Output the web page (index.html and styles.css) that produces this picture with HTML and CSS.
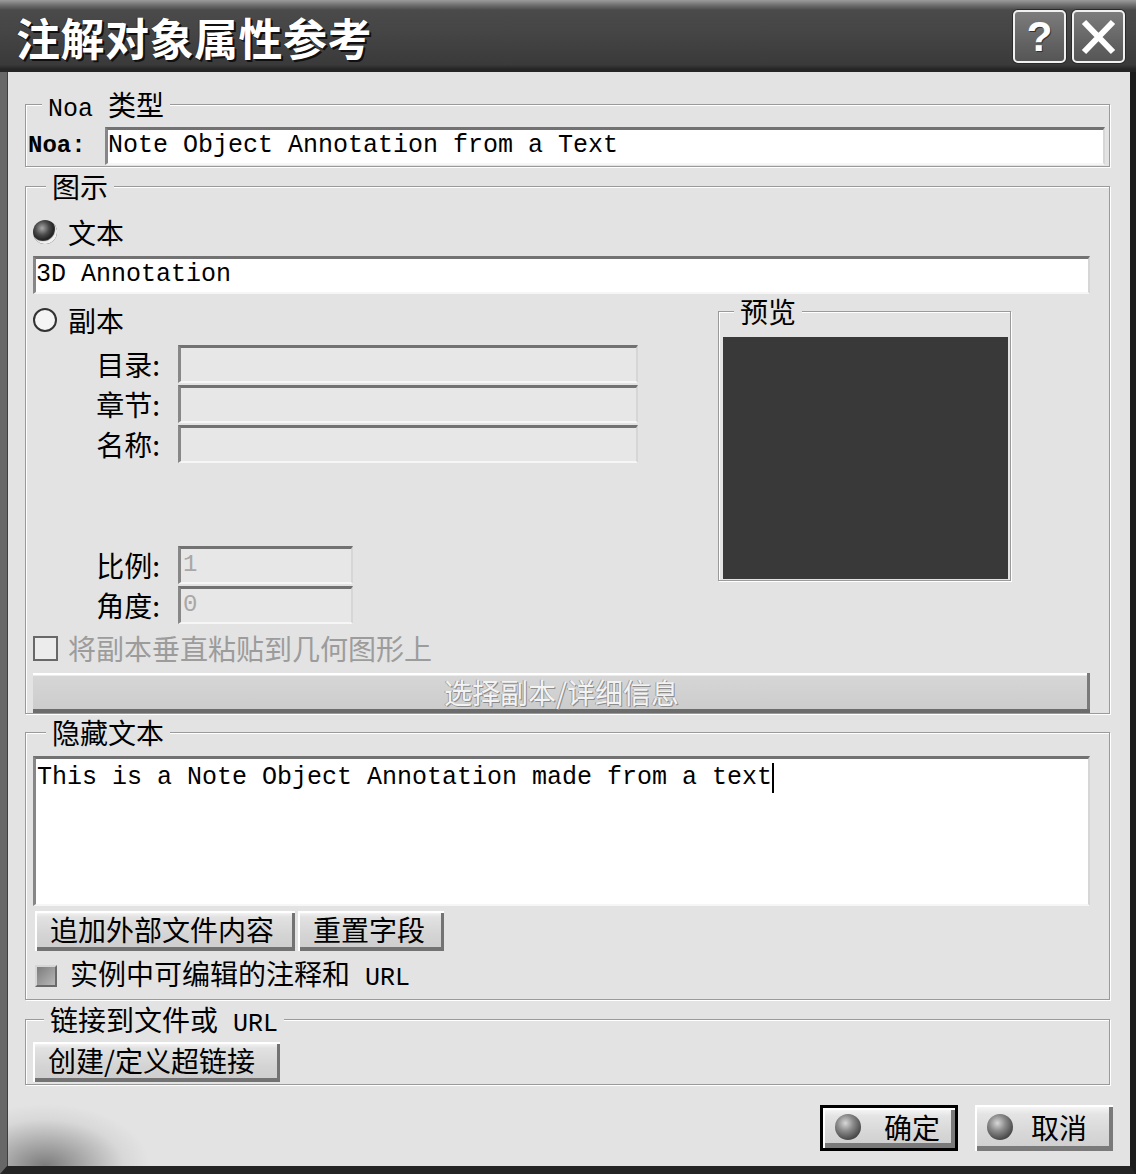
FILE: index.html
```html
<!DOCTYPE html>
<html lang="zh-CN">
<head>
<meta charset="utf-8">
<title>注解对象属性参考</title>
<link rel="stylesheet" href="styles.css">
</head>
<body>
<div class="window">
  <div class="titlebar">
    <div class="title">注解对象属性参考</div>
    <div class="title-btns">
      <div class="tbtn"><span class="q">?</span></div>
      <div class="tbtn">
        <svg width="40" height="40" viewBox="0 0 40 40"><path d="M5 5 L34 35 M34 5 L5 35" stroke="#fff" stroke-width="6" stroke-linecap="butt" fill="none"/></svg>
      </div>
    </div>
  </div>

  <div class="body">
    <fieldset class="group g1">
      <legend class="lg-g1"><span class="lat">Noa </span>类型</legend>
      <div class="row noa-row">
        <span class="lbl-noa">Noa:</span>
        <div class="field grow">Note Object Annotation from a Text</div>
      </div>
    </fieldset>

    <fieldset class="group g2">
      <legend class="lg">图示</legend>
      <div class="radio-row first">
        <span class="radio on"></span><span>文本</span>
      </div>
      <div class="field">3D Annotation</div>
      <div class="split">
        <div class="left-col">
          <div class="radio-row">
            <span class="radio off"></span><span>副本</span>
          </div>
          <div class="frow first-f">
            <span class="flbl">目录:</span><div class="field dis w460"></div>
          </div>
          <div class="frow">
            <span class="flbl">章节:</span><div class="field dis w460"></div>
          </div>
          <div class="frow">
            <span class="flbl">名称:</span><div class="field dis w460"></div>
          </div>
          <div class="frow scale-row">
            <span class="flbl">比例:</span><div class="field dis w175">1</div>
          </div>
          <div class="frow">
            <span class="flbl">角度:</span><div class="field dis w175">0</div>
          </div>
        </div>
        <fieldset class="group preview">
          <legend class="lg-pv">预览</legend>
          <div class="screen"></div>
        </fieldset>
      </div>
      <div class="check-row disabled">
        <span class="cbox"></span><span>将副本垂直粘贴到几何图形上</span>
      </div>
      <button class="btn-wide" type="button">选择副本/详细信息</button>
    </fieldset>

    <fieldset class="group g3">
      <legend class="lg">隐藏文本</legend>
      <div class="textarea">This is a Note Object Annotation made from a text<span class="caret"></span></div>
      <div class="btn-row">
        <button class="btn b-append" type="button">追加外部文件内容</button>
        <button class="btn b-reset" type="button">重置字段</button>
      </div>
      <div class="check-row checked-row">
        <span class="cbox on"></span><span>实例中可编辑的注释和<span class="lat"> URL</span></span>
      </div>
    </fieldset>

    <fieldset class="group g4">
      <legend class="lg-g4">链接到文件或<span class="lat"> URL</span></legend>
      <button class="btn b-link" type="button">创建/定义超链接</button>
    </fieldset>

    <div class="footer">
      <button class="dlg-btn default" type="button"><span class="sphere"></span><span class="dlg-txt">确定</span></button>
      <button class="dlg-btn cancel" type="button"><span class="sphere"></span><span class="dlg-txt">取消</span></button>
    </div>
  </div>
</div>
</body>
</html>
```
FILE: styles.css
```css
* { box-sizing: border-box; }
html, body { margin: 0; padding: 0; }
body {
  background: #ffffff;
  font-family: "Noto Sans CJK SC", sans-serif;
  color: #000;
}
.window {
  width: 1136px;
  height: 1174px;
  display: flex;
  flex-direction: column;
  background: #2a2a2a;
}

/* title bar */
.titlebar {
  height: 72px;
  flex: none;
  display: flex;
  align-items: center;
  justify-content: space-between;
  padding: 0 11px 2px 16px;
  background: linear-gradient(to bottom, #9c9c9c 0, #707070 5px, #4a4a4a 10px, #454545 45%, #3a3a3a 90%, #252525 96%, #252525 100%);
}
.title {
  color: #fff;
  font-size: 44px;
  font-weight: 700;
  line-height: 44px;
  padding-top: 4px;
  letter-spacing: 0.5px;
  text-shadow: 2px 2px 0 #101010, 1px 1px 0 #202020, -1px 0 0 #333;
}
.title-btns {
  display: flex;
  gap: 6px;
  margin-top: 3px;
}
.tbtn {
  width: 53px;
  height: 53px;
  border: 2px solid #f0f0f0;
  border-radius: 5px;
  background: linear-gradient(to bottom, #7c7c7c, #606060 70%, #565656);
  box-shadow: 0 0 0 1px #2a2a2a;
  display: flex;
  align-items: center;
  justify-content: center;
}
.q {
  color: #fff;
  font-family: "Liberation Sans", sans-serif;
  font-weight: 700;
  font-size: 42px;
  line-height: 42px;
  text-shadow: 1px 1px 0 #333;
}

/* body */
.body {
  flex: 1;
  display: flex;
  flex-direction: column;
  padding: 18px 20px 0 18px;
  background-color: #e3e3e3;
  background-image: radial-gradient(ellipse 105px 62px at 38px 100%, rgba(80,80,80,0.7) 0, rgba(120,120,120,0.5) 40%, rgba(190,190,190,0.3) 75%, rgba(227,227,227,0) 100%);
  background-repeat: no-repeat;
  border-left: 7px solid #676767;
  border-right: 6px solid #1c1c1c;
  border-bottom: 8px solid #242424;
  box-shadow: inset 1px 0 0 #3e3e3e;
}

.lat {
  font-family: "Liberation Mono", monospace;
  font-size: 25px;
  white-space: pre;
}

/* group boxes */
fieldset.group {
  margin: 0;
  min-width: 0;
  border: 1px solid #9a9a9a;
  box-shadow: inset 1px 1px 0 #fff, 1px 1px 0 #fff;
  padding: 0 19px 0 7px;
}
fieldset.group legend {
  padding: 0 6px;
  font-size: 28px;
  line-height: 28px;
  height: 28px;
  background: #e3e3e3;
  white-space: pre;
}
.lg { margin-left: 13px; }
.lg-g1 { margin-left: 14px; }
.lg-g4 { margin-left: 11px; }
.lg-pv { margin-left: 11px; }

.g1 { padding: 0 4px 1px 2px !important; }
.g2 { margin-top: 5px !important; }
.g3 { margin-top: 4px !important; padding-bottom: 5px !important; }
.g4 { margin-top: 5px !important; padding-bottom: 2px !important; }

.row { display: flex; align-items: center; }
.noa-row { margin-top: 9px; height: 38px; }
.lbl-noa {
  width: 77px;
  flex: none;
  font-family: "Liberation Mono", monospace;
  font-weight: 700;
  font-size: 24px;
  line-height: 38px;
}
.grow { flex: 1; }

.field {
  height: 38px;
  background: #fff;
  border-style: solid;
  border-width: 3px 2px 2px 3px;
  border-color: #727272 #d6d6d6 #f6f6f6 #878787;
  font-family: "Liberation Mono", monospace;
  font-size: 25px;
  line-height: 32px;
  white-space: pre;
  overflow: hidden;
}
.field.dis {
  background: #e7e7e7;
  color: #a8a8a8;
  padding-left: 2px;
  font-size: 24px;
}
.w460 { width: 460px; }
.w175 { width: 175px; }

.radio-row {
  display: flex;
  align-items: center;
  gap: 11px;
  height: 34px;
  font-size: 28px;
  line-height: 34px;
}
.radio-row.first { margin-top: 15px; margin-bottom: 7px; }
.radio {
  width: 24px;
  height: 24px;
  border-radius: 50%;
  flex: none;
}
.radio.on {
  background: radial-gradient(circle at 38% 34%, #a8a8a8 0, #4a4a4a 32%, #141414 62%, #0a0a0a 100%);
  box-shadow: inset -2px -3px 1px rgba(255,255,255,0.95);
}
.radio.off {
  background: #f4f4f4;
  border: 2px solid #333;
}

.split {
  display: grid;
  grid-template-columns: 685px 293px;
  align-items: start;
  margin-top: 3px;
}
.left-col { padding-top: 6px; }
.frow {
  display: flex;
  align-items: center;
  height: 38px;
  margin-bottom: 2px;
}
.first-f { margin-top: 8px; }
.scale-row { margin-top: 83px; }
.flbl {
  width: 127px;
  margin-right: 18px;
  text-align: right;
  font-size: 28px;
  line-height: 38px;
  flex: none;
}

fieldset.preview {
  padding: 12px 2px 1px 4px;
}
.screen {
  height: 242px;
  background: #393939;
}

.check-row {
  display: flex;
  align-items: center;
  gap: 10px;
  height: 36px;
  margin-top: 4px;
  font-size: 28px;
  line-height: 36px;
  white-space: pre;
}
.check-row.disabled { color: #9c9c9c; }
.cbox {
  width: 25px;
  height: 25px;
  flex: none;
  border: 2px solid #686868;
  background: #ececec;
}
.cbox.on {
  width: 22px;
  height: 22px;
  border-color: #d6d6d6 #6a6a6a #6a6a6a #d6d6d6;
  background: linear-gradient(135deg, #7c7c7c, #b8b8b8);
}
.checked-row { margin-top: 7px; padding-left: 2px; gap: 13px; }

button {
  font-family: inherit;
  border: none;
  margin: 0;
  padding: 0;
  color: #000;
  cursor: default;
}
.btn-wide {
  display: block;
  width: 100%;
  height: 40px;
  margin-top: 7px;
  background: linear-gradient(to bottom, #ffffff 0, #ffffff 2px, #d6d6d6 3px, #cbcbcb 100%);
  box-shadow: inset 0 -4px 0 #6c6c6c, inset -3px 0 0 #7a7a7a;
  color: #f3f3f3;
  text-shadow: 1px 1px 0 #8c8c8c, -1px 0 0 #a0a0a0;
  font-size: 28px;
  line-height: 36px;
  padding-bottom: 3px;
  text-align: center;
}

.textarea {
  height: 150px;
  margin-top: 10px;
  background: #fff;
  border-style: solid;
  border-width: 3px 2px 2px 3px;
  border-color: #727272 #d6d6d6 #f6f6f6 #878787;
  font-family: "Liberation Mono", monospace;
  font-size: 25px;
  line-height: 30px;
  padding: 4px 0 0 1px;
  white-space: pre;
}
.caret {
  display: inline-block;
  width: 2px;
  height: 30px;
  background: #000;
  vertical-align: top;
}

.btn-row {
  display: flex;
  gap: 3px;
  margin-top: 5px;
  padding-left: 2px;
}
.btn {
  height: 40px;
  padding: 0 0 4px 15px;
  text-align: left;
  font-size: 28px;
  line-height: 36px;
  background: linear-gradient(to bottom, #fafafa 0, #e2e2e2 15%, #d4d4d4 60%, #cdcdcd 100%);
  box-shadow: inset 2px 2px 0 #fff, inset -3px -4px 0 #737373;
  white-space: pre;
}
.b-append { width: 260px; }
.b-reset { width: 146px; }
.b-link { width: 247px; margin-top: 9px; display: block; }

.footer {
  display: flex;
  justify-content: flex-end;
  gap: 17px;
  margin-top: 20px;
  margin-right: -3px;
}
.dlg-btn {
  width: 138px;
  height: 46px;
  display: flex;
  align-items: center;
  padding: 0 0 3px 12px;
  background: linear-gradient(to bottom, #fafafa 0, #e4e4e4 20%, #d6d6d6 65%, #cecece 100%);
  box-shadow: inset 2px 2px 0 #fff, inset -4px -5px 0 #7a7a7a;
  font-size: 28px;
  line-height: 36px;
}
.dlg-btn.default {
  border: 3px solid #000;
  gap: 23px;
}
.dlg-btn.cancel { gap: 18px; }
.sphere {
  width: 26px;
  height: 26px;
  border-radius: 50%;
  flex: none;
  background: radial-gradient(circle at 40% 35%, #d8d8d8 0, #8a8a8a 35%, #4a4a4a 72%, #333 100%);
}
```
